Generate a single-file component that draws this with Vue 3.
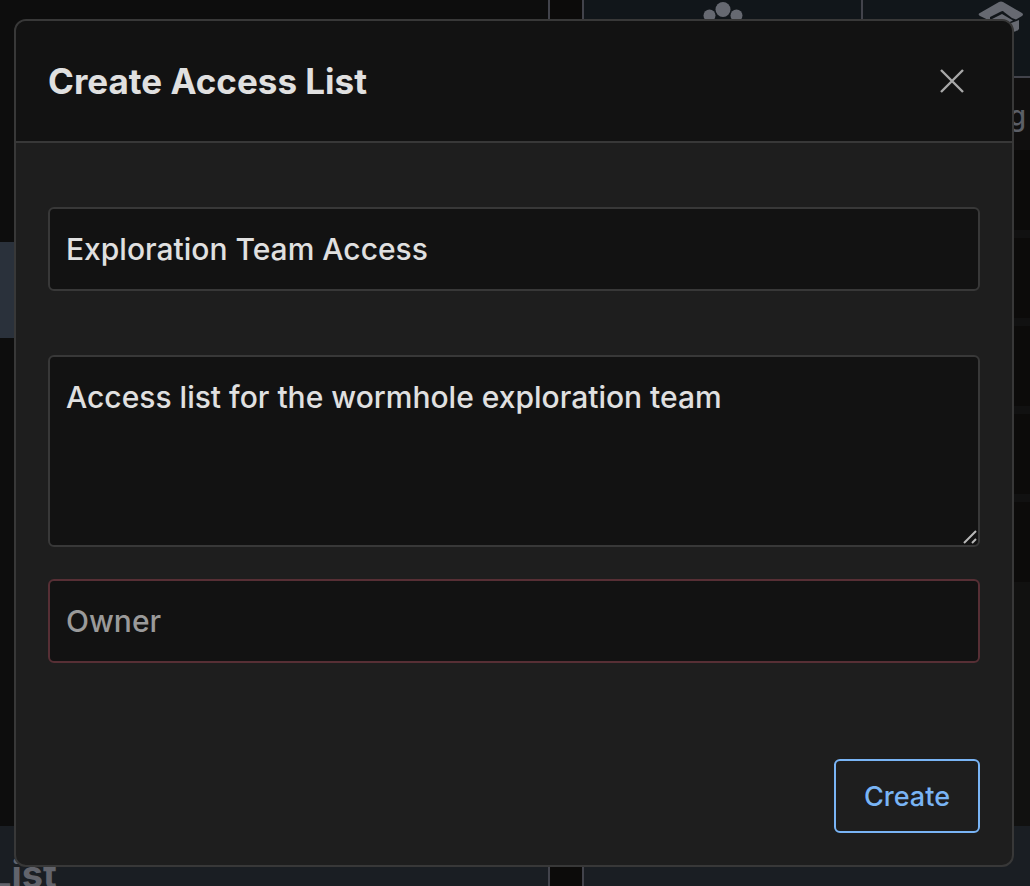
<script setup>
import { ref } from 'vue';

const open = ref(true);
const name = ref('Exploration Team Access');
const description = ref('Access list for the wormhole exploration team');
const owner = ref('');
const rows = 5;
</script>

<template>
    <div class="page">
        <!-- Page behind the dialog -->
        <div class="backdrop" aria-hidden="true">
            <section class="panel side">
                <div class="side-top"></div>
                <div class="side-item"></div>
                <div class="fill"></div>
                <div class="panel-footer"><span class="footer-title">List</span></div>
            </section>
            <section class="panel main">
                <div class="tabs">
                    <div class="tab tab-members">
                        <svg width="40" height="36" viewBox="0 0 40 36">
                            <circle cx="20" cy="9.5" r="7.5" />
                            <circle cx="6.5" cy="15.5" r="6" />
                            <circle cx="33.5" cy="15.5" r="6" />
                            <path d="M8 34c0-9 5-14 12-14s12 5 12 14z" />
                        </svg>
                    </div>
                    <div class="tab tab-training">
                        <svg width="46" height="36" viewBox="0 0 46 36">
                            <path d="M1 13.5 L21 2 Q23 1 25 2 L44 13 Q46 14.5 44 16 L38 19.5 L34 18 L26 12 Q25 10.500 23 11.500 L12 17 L12 19 L14 19 L24 14 L35 20.500 L23 26 L2 16 Q0 15 1 13.500z" />
                            <path d="M33 23 L41 20 L41 29 Q39 32 33 32z" />
                        </svg>
                    </div>
                </div>
                <div class="list-head">g</div>
                <div class="rows">
                    <div v-for="n in rows" :key="n" class="row"></div>
                </div>
                <div class="fill main-fill"></div>
                <div class="panel-footer"></div>
            </section>
        </div>

        <!-- Dialog -->
        <div v-if="open" class="overlay">
            <form class="dialog" role="dialog" aria-labelledby="dialog-title" @submit.prevent>
                <header class="dialog-header">
                    <h2 id="dialog-title">Create Access List</h2>
                    <button type="button" class="close" aria-label="Close" @click="open = false">
                        <svg width="24" height="24" viewBox="0 0 24 24">
                            <path d="M1 1 L23 23 M23 1 L1 23" />
                        </svg>
                    </button>
                </header>
                <div class="dialog-body">
                    <input v-model="name" class="field" type="text" aria-label="Name" placeholder="Name">
                    <div class="area">
                        <textarea v-model="description" class="field" aria-label="Description" placeholder="Description" spellcheck="false"></textarea>
                        <svg class="grip" width="16" height="16" viewBox="0 0 16 16">
                            <path d="M2 14 L14 2 M10 14 L14 10" />
                        </svg>
                    </div>
                    <input v-model="owner" class="field invalid" type="text" aria-label="Owner" placeholder="Owner">
                    <div class="actions">
                        <button type="submit" class="create">Create</button>
                    </div>
                </div>
            </form>
        </div>
    </div>
</template>

<style>
body {
    background: #0c0b0a;
}
</style>

<style scoped>
.page {
    position: relative;
    min-height: 100vh;
    font-family: Inter, Roboto, sans-serif;
    color: #e0e0e0;
}

.page * {
    box-sizing: border-box;
}

.backdrop {
    display: grid;
    grid-template-columns: 550fr 448fr;
    column-gap: 32px;
    height: 100vh;
    overflow: hidden;
}

.panel {
    display: flex;
    flex-direction: column;
    min-width: 0;
    background: #0d0d0d;
}

.side {
    border-right: 2px solid #42434b;
}

.main {
    border-left: 2px solid #42434b;
}

.side-top {
    height: 242px;
}

.side-item {
    height: 96px;
    background: #2a313b;
}

.fill {
    flex: 1;
}

.panel-footer {
    flex: none;
    height: 60px;
    background: #1a1e23;
}

.footer-title {
    display: flex;
    justify-content: flex-end;
    width: 57px;
    padding-top: 24px;
    font-size: 38px;
    line-height: 48px;
    font-weight: 700;
    color: #62646c;
}

.tabs {
    display: flex;
    height: 78px;
    flex: none;
    border-bottom: 2px solid #42434b;
    background: #11161a;
}

.tab {
    display: flex;
    justify-content: center;
    flex: none;
    width: 277px;
}

.tab + .tab {
    border-left: 2px solid #42434b;
    width: 277px;
}

.tab svg {
    fill: #666971;
}

.list-head {
    flex: none;
    height: 72px;
    padding: 20px 4px;
    background: #100f0f;
    text-align: right;
    font-size: 28px;
    line-height: 36px;
    font-weight: 500;
    color: #5b5e66;
}

.row {
    height: 88px;
    border-bottom: 8px solid #111111;
    background: #0c0b0a;
}

.rows .row:last-child {
    height: 80px;
    border-bottom: 0;
}

.main-fill {
    background: #111110;
}

.overlay {
    position: absolute;
    inset: 0;
    padding: 19px 16px 19px 14px;
}

.dialog {
    border: 2px solid #383838;
    border-radius: 12px;
    overflow: hidden;
    background: #1e1e1e;
}

.dialog-header {
    display: flex;
    align-items: center;
    justify-content: space-between;
    height: 122px;
    padding: 0 48px 0 32px;
    border-bottom: 2px solid #383838;
    background: #121212;
}

h2 {
    margin: 0;
    font-size: 35px;
    line-height: 48px;
    font-weight: 700;
}

.close {
    display: flex;
    padding: 0;
    border: 0;
    background: none;
    cursor: pointer;
}

.close path {
    stroke: #a8a8a8;
    stroke-width: 2.4;
}

.dialog-body {
    display: flex;
    flex-direction: column;
    padding: 64px 32px 32px;
}

.field {
    display: block;
    width: 100%;
    height: 84px;
    margin: 0;
    padding: 16px;
    border: 2px solid #383838;
    border-radius: 6px;
    outline: 0;
    background: #121212;
    color: #e0e0e0;
    font-family: inherit;
    font-size: 30px;
    line-height: 48px;
    font-weight: 500;
}

.field::placeholder {
    color: #9a9a9a;
    opacity: 1;
}

.area {
    position: relative;
    margin: 64px 0 32px;
}

textarea.field {
    height: 192px;
    resize: none;
}

.grip {
    position: absolute;
    right: 2px;
    bottom: 2px;
    pointer-events: none;
}

.grip path {
    stroke: #b8b8b8;
    stroke-width: 2;
}

.invalid {
    border-color: #572f35;
}

.actions {
    display: flex;
    justify-content: flex-end;
    margin-top: 96px;
}

.create {
    height: 74px;
    padding: 0 28px;
    border: 2px solid #79b4f5;
    border-radius: 6px;
    background: none;
    color: #79b4f5;
    font-family: inherit;
    font-size: 27px;
    font-weight: 500;
    cursor: pointer;
}
</style>
